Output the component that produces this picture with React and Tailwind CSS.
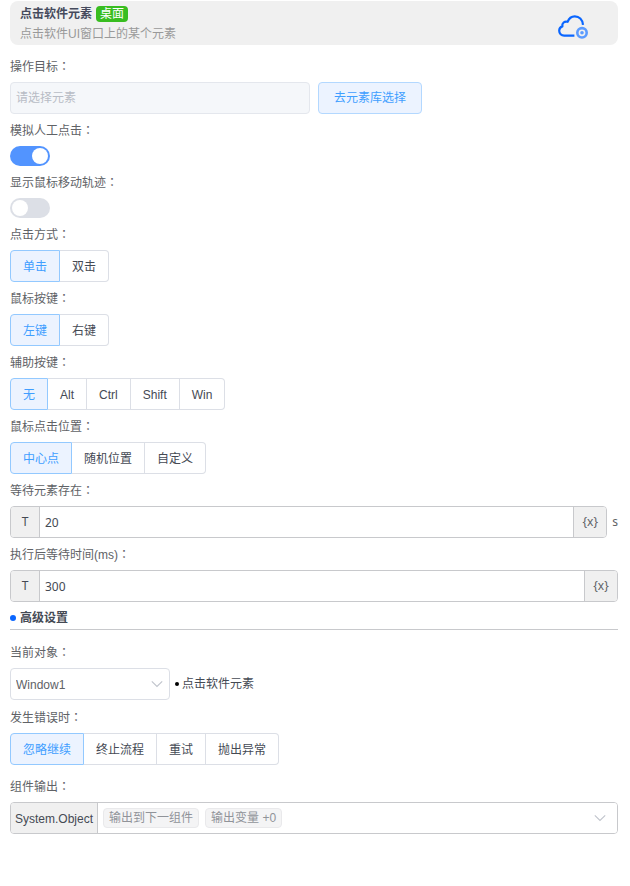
import { useState } from 'react';

const Colon = () => <span className="font-['Noto_Sans_CJK_TC',sans-serif]">：</span>;

const Field = ({ label, htmlFor, children }) => (
  <div className="flex flex-col gap-1.5">
    {htmlFor ? (
      <label htmlFor={htmlFor} className="h-5 leading-5 text-[#606266]">{label}<Colon /></label>
    ) : (
      <div className="h-5 leading-5 text-[#606266]">{label}<Colon /></div>
    )}
    {children}
  </div>
);

const Switch = ({ id, checked, onChange }) => (
  <input
    id={id}
    type="checkbox"
    role="switch"
    checked={checked}
    onChange={(e) => onChange(e.target.checked)}
    className="flex h-5 w-10 appearance-none items-center rounded-full bg-[#dcdfe6] px-0.5 before:size-4 before:rounded-full before:bg-white checked:justify-end checked:bg-[#5294ff]"
  />
);

const RadioGroup = ({ name, label, options }) => {
  const [value, setValue] = useState(options[0]);

  return (
    <div role="radiogroup" aria-label={label} className="flex">
      {options.map((option) => (
        <label
          key={option}
          className="relative flex h-8 items-center border border-l-0 border-[#dcdfe6] bg-white px-3 pt-0.5 text-[#454a54] first:rounded-l first:border-l last:rounded-r has-checked:border-[#93c9ff] has-checked:bg-[#ecf3ff] has-checked:text-[#409eff]"
        >
          <input
            type="radio"
            name={name}
            value={option}
            checked={value === option}
            onChange={() => setValue(option)}
            className="sr-only"
          />
          {option}
        </label>
      ))}
    </div>
  );
};

const VariableInput = ({ id, defaultValue, unit }) => (
  <div className="flex items-center gap-[5px]">
    <div className="flex h-8 flex-1 overflow-hidden rounded border border-[#c8c9cc] font-['Noto_Sans','Noto_Sans_CJK_SC',sans-serif] text-[#454a54]">
      <button type="button" className="w-[29px] border-r border-[#c8c9cc] bg-[#f0f0f0]">T</button>
      <input id={id} type="text" defaultValue={defaultValue} className="min-w-0 flex-1 bg-white px-[5px] pt-0.5 outline-none" />
      <button type="button" className="w-[33px] border-l border-[#c8c9cc] bg-[#f0f0f0] text-[#606266]">{'{x}'}</button>
    </div>
    {unit && <span className="font-['Noto_Sans',sans-serif] text-[#606266]">{unit}</span>}
  </div>
);

const Chevron = ({ className }) => (
  <svg viewBox="0 0 12 8" fill="none" stroke="#c0c4cc" strokeWidth="1.1" className={className}>
    <path d="M0.8 1.3 6 6.5l5.2-5.2" />
  </svg>
);

const CloudIcon = () => (
  <svg viewBox="0 0 30 25" fill="none" className="h-[25px] w-[30px]">
    <path
      d="M16.400 20.600H6.200C3.300 20.600 1.200 18.600 1.200 15.800c0-2.100 1.300-3.800 3.200-4.400-.7-3.300 2.200-5.600 5.200-4.600C10.900 3.300 13.500 1.300 16.800 1.300c4.300 0 7.700 3.200 8.200 8.500"
      stroke="#0a66ff"
      strokeWidth="2.2"
      strokeLinejoin="round"
    />
    <circle cx="24" cy="17.800" r="4.700" stroke="#5b9bff" strokeWidth="2.600" />
    <circle cx="24" cy="17.800" r="1.800" fill="#5b9bff" />
  </svg>
);

const App = () => {
  const [simulate, setSimulate] = useState(true);
  const [showTrack, setShowTrack] = useState(false);

  return (
    <div className="bg-white pt-px pr-3 pb-4 pl-2.5 font-['Liberation_Sans','Noto_Sans_CJK_SC',sans-serif] text-xs">
      <header className="flex h-11 items-center justify-between rounded-lg bg-[#f0f0f0] pr-[30px] pl-2.5">
        <div className="flex flex-col pt-0.5">
          <div className="flex h-5 items-center gap-1">
            <h1 className="font-bold text-[#454a5c]">点击软件元素</h1>
            <span className="h-4 rounded bg-[#38bd20] px-1 leading-4 text-white">桌面</span>
          </div>
          <p className="h-5 leading-5 text-[#999999]">点击软件UI窗口上的某个元素</p>
        </div>
        <div className="pt-2">
          <CloudIcon />
        </div>
      </header>

      <main className="flex flex-col gap-1.5 pt-[11px]">
        <Field label="操作目标" htmlFor="target">
          <div className="flex gap-2">
            <input
              id="target"
              type="text"
              disabled
              placeholder="请选择元素"
              className="h-8 w-[300px] rounded border border-[#e4e7ed] bg-[#f5f7fa] px-[5px] placeholder:text-[#b8bcc5]"
            />
            <button type="button" className="h-8 rounded border border-[#b3d8ff] bg-[#ecf3ff] px-[15px] text-[#409eff]">去元素库选择</button>
          </div>
        </Field>

        <Field label="模拟人工点击" htmlFor="simulate">
          <Switch id="simulate" checked={simulate} onChange={setSimulate} />
        </Field>

        <Field label="显示鼠标移动轨迹" htmlFor="track">
          <Switch id="track" checked={showTrack} onChange={setShowTrack} />
        </Field>

        <Field label="点击方式">
          <RadioGroup name="clickType" label="点击方式" options={['单击', '双击']} />
        </Field>

        <Field label="鼠标按键">
          <RadioGroup name="mouseButton" label="鼠标按键" options={['左键', '右键']} />
        </Field>

        <Field label="辅助按键">
          <RadioGroup name="modifier" label="辅助按键" options={['无', 'Alt', 'Ctrl', 'Shift', 'Win']} />
        </Field>

        <Field label="鼠标点击位置">
          <RadioGroup name="position" label="鼠标点击位置" options={['中心点', '随机位置', '自定义']} />
        </Field>

        <Field label="等待元素存在" htmlFor="waitExist">
          <VariableInput id="waitExist" defaultValue="20" unit="s" />
        </Field>

        <Field label="执行后等待时间(ms)" htmlFor="waitAfter">
          <VariableInput id="waitAfter" defaultValue="300" />
        </Field>

        <div className="flex h-[22px] items-center gap-1 border-b border-[#c8c9cc] pb-px">
          <span className="size-1.5 rounded-full bg-[#0a66ff]" />
          <h2 className="font-bold text-[#454a54]">高级设置</h2>
        </div>
      </main>

      {/* advanced settings */}
      <section className="flex flex-col gap-[7px] pt-3">
        <Field label="当前对象" htmlFor="object">
          <div className="flex items-center gap-[5px]">
            <div className="relative w-40">
              <select id="object" className="h-8 w-full appearance-none rounded border border-[#dcdfe6] bg-white px-[5px] pt-0.5 text-[#606266]">
                <option>Window1</option>
              </select>
              <Chevron className="pointer-events-none absolute top-3 right-[7px] h-2 w-3" />
            </div>
            <div className="flex items-center gap-[3px] text-[#454a54]">
              <span className="size-1 rounded-full bg-black" />
              点击软件元素
            </div>
          </div>
        </Field>

        <Field label="发生错误时">
          <RadioGroup name="onError" label="发生错误时" options={['忽略继续', '终止流程', '重试', '抛出异常']} />
        </Field>

        <div className="pt-1">
          <Field label="组件输出">
            <div className="flex h-8 overflow-hidden rounded border border-[#c8c9cc]">
              <span className="flex items-center border-r border-[#c8c9cc] bg-[#f0f0f0] px-1 pt-0.5 text-[#454a54]">System.Object</span>
              <button type="button" aria-label="组件输出" className="flex flex-1 items-center gap-1.5 bg-white pr-[11px] pl-[5px] text-[#909399]">
                <span className="h-5 rounded border border-[#e9e9eb] bg-[#f4f4f5] px-[5px] leading-[18px]">输出到下一组件</span>
                <span className="h-5 rounded border border-[#e9e9eb] bg-[#f4f4f5] px-[5px] leading-[18px]">输出变量 +0</span>
                <Chevron className="ml-auto h-2 w-3" />
              </button>
            </div>
          </Field>
        </div>
      </section>
    </div>
  );
};

export default App;
